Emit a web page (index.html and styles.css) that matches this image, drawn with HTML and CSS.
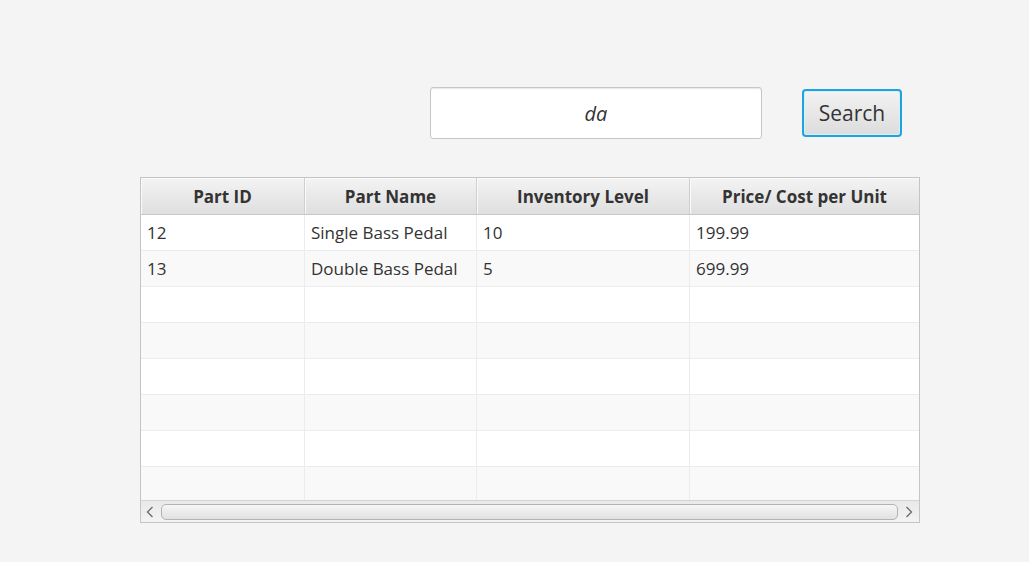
FILE: index.html
```html
<!DOCTYPE html>
<html lang="en">
<head>
<meta charset="utf-8">
<title>Parts</title>
<link rel="stylesheet" href="styles.css">
</head>
<body>
<div class="page">
  <div class="search-row">
    <div class="field"><span class="field-text">da</span></div>
    <button class="btn">Search</button>
  </div>
  <div class="table">
    <div class="thead">
      <div class="th">Part ID</div>
      <div class="th">Part Name</div>
      <div class="th">Inventory Level</div>
      <div class="th">Price/ Cost per Unit</div>
    </div>
    <div class="tbody">
      <div class="tr"><div class="td">12</div><div class="td">Single Bass Pedal</div><div class="td">10</div><div class="td">199.99</div></div>
      <div class="tr alt"><div class="td">13</div><div class="td">Double Bass Pedal</div><div class="td">5</div><div class="td">699.99</div></div>
      <div class="tr"><div class="td"></div><div class="td"></div><div class="td"></div><div class="td"></div></div>
      <div class="tr alt"><div class="td"></div><div class="td"></div><div class="td"></div><div class="td"></div></div>
      <div class="tr"><div class="td"></div><div class="td"></div><div class="td"></div><div class="td"></div></div>
      <div class="tr alt"><div class="td"></div><div class="td"></div><div class="td"></div><div class="td"></div></div>
      <div class="tr"><div class="td"></div><div class="td"></div><div class="td"></div><div class="td"></div></div>
      <div class="tr alt"><div class="td"></div><div class="td"></div><div class="td"></div><div class="td"></div></div>
    </div>
    <div class="hscroll">
      <span class="arrow">
        <svg width="8" height="12" viewBox="0 0 8 12"><path d="M6.5 1 L1.5 6 L6.5 11" fill="none" stroke="#6a6a6a" stroke-width="1.3"/></svg>
      </span>
      <div class="thumb"></div>
      <span class="arrow">
        <svg width="8" height="12" viewBox="0 0 8 12"><path d="M1.5 1 L6.5 6 L1.5 11" fill="none" stroke="#6a6a6a" stroke-width="1.3"/></svg>
      </span>
    </div>
  </div>
</div>
</body>
</html>
```

FILE: styles.css
```css
html, body {
  margin: 0;
  padding: 0;
  background: #f4f4f4;
}
body {
  font-family: "Open Sans", "Noto Sans", sans-serif;
  color: #333333;
}
.page {
  width: 1029px;
  height: 562px;
  display: flex;
  flex-direction: column;
  padding-top: 87px;
  box-sizing: border-box;
}
.search-row {
  display: flex;
  align-items: center;
  justify-content: flex-end;
  gap: 40px;
  padding-right: 127px;
}
.field {
  width: 332px;
  height: 52px;
  box-sizing: border-box;
  background: #ffffff;
  border: 1px solid #c6c6c6;
  border-radius: 3px;
  box-shadow: inset 0 1px 1px #e8e8e8;
  display: flex;
  align-items: center;
  justify-content: center;
}
.field-text {
  font-style: italic;
  font-size: 20px;
  color: #333333;
}
.btn {
  width: 100px;
  height: 48px;
  box-sizing: border-box;
  border: 2px solid #1fa3dc;
  border-radius: 4px;
  background: linear-gradient(to bottom, #f2f2f2, #dcdcdc);
  box-shadow: inset 0 0 0 1px #d6eef8;
  font-family: "Open Sans", "Noto Sans", sans-serif;
  font-size: 21px;
  color: #333333;
  padding: 0;
}
.table {
  margin-top: 38px;
  margin-left: 140px;
  width: 780px;
  height: 346px;
  box-sizing: border-box;
  border: 1px solid #c4c4c4;
  background: #ffffff;
  display: flex;
  flex-direction: column;
  overflow: hidden;
}
.thead, .tr {
  display: grid;
  grid-template-columns: 164px 172px 213px 229px;
}
.thead {
  height: 37px;
  box-sizing: border-box;
  border-bottom: 1px solid #c8c8c8;
  flex: none;
}
.th {
  background: linear-gradient(to bottom, #f3f3f3, #dfdfdf);
  border-right: 1px solid #cfcfcf;
  box-shadow: inset 1px 1px 0 #fafafa;
  font-weight: 700;
  font-size: 17px;
  padding-top: 1px;
  display: flex;
  align-items: center;
  justify-content: center;
  color: #333333;
}
.th:last-child {
  border-right: none;
}
.tbody {
  flex: 1;
  overflow: hidden;
}
.tr {
  height: 36px;
  box-sizing: border-box;
  border-bottom: 1px solid #ececec;
  background: #ffffff;
}
.tr.alt {
  background: #f9f9f9;
}
.td {
  border-right: 1px solid #ececec;
  font-size: 17px;
  padding-left: 6px;
  display: flex;
  align-items: center;
  color: #333333;
}
.td:last-child {
  border-right: none;
}
.hscroll {
  height: 22px;
  flex: none;
  box-sizing: border-box;
  border-top: 1px solid #d4d4d4;
  background: linear-gradient(to bottom, #e9e9e9, #f3f3f3);
  display: flex;
  align-items: center;
  padding: 0 5px 0 4px;
  gap: 6px;
}
.arrow {
  width: 10px;
  display: flex;
  align-items: center;
  justify-content: center;
}
.thumb {
  flex: 1;
  height: 16px;
  box-sizing: border-box;
  border: 1px solid #b3b3b3;
  border-radius: 5px;
  background: linear-gradient(to bottom, #f6f6f6, #e1e1e1);
}
```
